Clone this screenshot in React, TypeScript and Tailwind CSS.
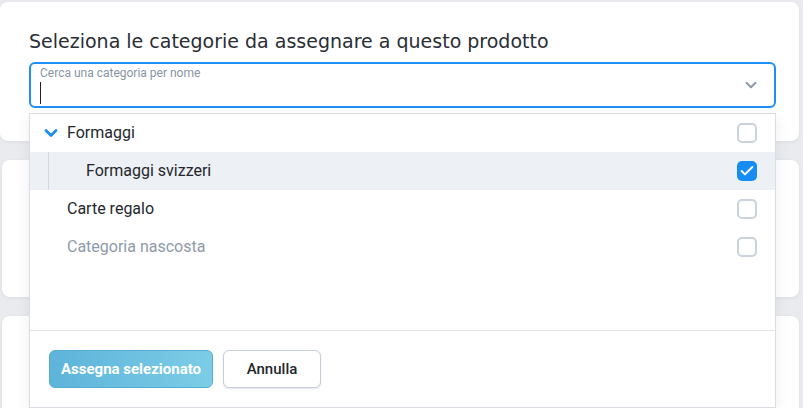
import { Check, ChevronDown } from 'lucide-react';

const rows = [
  { label: 'Formaggi', level: 0, expanded: true, checked: false, muted: false, active: false },
  { label: 'Formaggi svizzeri', level: 1, expanded: false, checked: true, muted: false, active: true },
  { label: 'Carte regalo', level: 0, expanded: false, checked: false, muted: false, active: false },
  { label: 'Categoria nascosta', level: 0, expanded: false, checked: false, muted: true, active: false },
];

function Checkbox({ checked }: { checked: boolean }) {
  if (checked) {
    return (
      <span className="w-5 h-5 rounded-[5px] bg-[#168cf5] flex items-center justify-center">
        <Check className="w-4 h-4 text-white" strokeWidth={3} />
      </span>
    );
  }
  return <span className="w-5 h-5 rounded-[5px] border-2 border-[#cbd2db] bg-white" />;
}

function CategoryRow({ row }: { row: (typeof rows)[number] }) {
  return (
    <div className={`h-[38px] flex items-center pr-[18px] ${row.active ? 'bg-[#edf0f4]' : 'bg-white'}`}>
      {row.level === 1 ? (
        <div className="flex items-stretch h-full">
          <span className="w-[18px]" />
          <span className="w-px bg-[#d3d8df]" />
        </div>
      ) : null}
      <div className={`flex-1 flex items-center ${row.level === 1 ? 'pl-[37px]' : 'pl-[11px]'}`}>
        {row.level === 0 ? (
          <span className="w-[26px] flex items-center">
            {row.expanded && <ChevronDown className="w-[20px] h-[20px] text-[#168cf5]" strokeWidth={3.2} />}
          </span>
        ) : null}
        <span className={`text-[16px] ${row.muted ? 'text-[#8e9aab]' : 'text-[#23272d]'}`}>{row.label}</span>
      </div>
      <Checkbox checked={row.checked} />
    </div>
  );
}

export default function App() {
  return (
    <div
      className="relative w-[803px] h-[408px] overflow-hidden bg-[#e9ebee]"
      style={{ fontFamily: 'Roboto, "Noto Sans", sans-serif' }}
    >
      <div className="flex flex-col gap-[19px] pt-[2px] pr-[4px]">
        <div className="h-[139px] bg-white rounded-lg shadow-[0_1px_4px_rgba(0,0,0,0.06)] px-[29px] pt-[26px] pr-[23px]">
          <h2
            className="text-[19px] leading-[26px] text-[#2a2e34] font-medium"
            style={{ fontFamily: '"DejaVu Sans", "Noto Sans", sans-serif' }}
          >
            Seleziona le categorie da assegnare a questo prodotto
          </h2>
          <div className="mt-[8px] h-[46px] rounded-[6px] border-2 border-[#1e8ff5] bg-white flex items-center pl-[9px] pr-[14px]">
            <div className="flex-1 flex flex-col">
              <span className="text-[12px] leading-[14px] text-[#8894a6] -mt-[1px]">Cerca una categoria per nome</span>
              <span className="mt-[2px] w-px h-[22px] bg-[#1f2328]" />
            </div>
            <ChevronDown className="w-[18px] h-[18px] text-[#8e99a8]" strokeWidth={2.6} />
          </div>
        </div>
        <div className="h-[137px] bg-white rounded-lg shadow-[0_1px_4px_rgba(0,0,0,0.06)] ml-[2px]" />
        <div className="h-[137px] bg-white rounded-lg shadow-[0_1px_4px_rgba(0,0,0,0.06)] ml-[2px]" />
      </div>

      <div className="absolute left-[29px] top-[113px] w-[747px] h-[295px] bg-white border border-[#dadee4] shadow-[0_4px_14px_rgba(0,0,0,0.07)] flex flex-col">
        <div className="h-[216px]">
          {rows.map((row) => (
            <CategoryRow key={row.label} row={row} />
          ))}
        </div>
        <div className="border-t border-[#e1e5ea] flex items-start gap-[10px] pl-[19px] pt-[19px] h-[77px]">
          <button className="h-[38px] px-[8px] rounded-[6px] bg-gradient-to-r from-[#5db3da] to-[#7ccde6] border border-[#58acd3] text-white text-[15px] font-bold w-[164px]">
            Assegna selezionato
          </button>
          <button className="h-[38px] w-[98px] rounded-[6px] bg-white border border-[#c7ced7] shadow-[0_1px_2px_rgba(0,0,0,0.1)] text-[#23272d] text-[15px] font-medium">
            Annulla
          </button>
        </div>
      </div>
    </div>
  );
}
